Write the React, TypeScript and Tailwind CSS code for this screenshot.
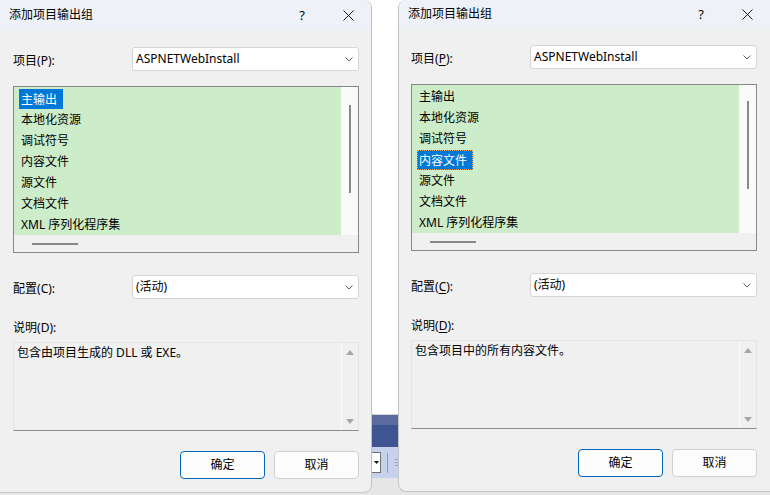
import React from "react"

const ITEMS = ["主输出", "本地化资源", "调试符号", "内容文件", "源文件", "文档文件", "XML 序列化程序集"]

// label like 项目(P): — the right dialog shows the access key underlined
function Accel({ text, k, u }: { text: string; k: string; u: boolean }) {
  return (
    <span>
      {text}(
      {u ? <span className="underline underline-offset-[2px]">{k}</span> : k}
      ):
    </span>
  )
}

function Chevron() {
  return (
    <svg width="8" height="5" viewBox="0 0 8 5">
      <path d="M0.5 0.5 L4 4 L7.5 0.5" fill="none" stroke="#606060" strokeWidth="1" />
    </svg>
  )
}

function Combo({ value }: { value: string }) {
  return (
    <div className="flex h-[24px] w-[227px] items-center rounded-[3px] border border-[#d5d5d5] bg-white pl-[3px] pr-[5px]">
      <span className="flex-1 leading-[16px]">{value}</span>
      <Chevron />
    </div>
  )
}

function Row({ text, k, u, value }: { text: string; k: string; u: boolean; value: string }) {
  return (
    <div className="flex items-center">
      <div className="w-[119px] pt-[3px] leading-[16px]">
        <Accel text={text} k={k} u={u} />
      </div>
      <Combo value={value} />
    </div>
  )
}

function ListBox({ sel, focus, thumbTop }: { sel: number; focus: boolean; thumbTop: number }) {
  return (
    <div className="mt-[15px] flex h-[167px] flex-col border border-[#858885]">
      <div className="flex h-[148px]">
        <div className="w-[327px] bg-[#cdecc9] pl-[5px] pt-px">
          {ITEMS.map((t, i) => (
            <div key={t} className="flex h-[21px] items-center">
              {i === sel ? (
                <span
                  className={
                    focus
                      ? "h-[20px] border border-dotted border-[#e0a060] bg-[#0078d7] pl-[1px] pr-[5px] leading-[19px] text-white"
                      : "h-[20px] bg-[#0078d7] pl-[2px] pr-[6px] leading-[21px] text-white"
                  }
                >
                  {t}
                </span>
              ) : (
                <span className="pl-[2px] leading-[21px]">{t}</span>
              )}
            </div>
          ))}
        </div>
        <div className="w-[17px] bg-[#fafafa]" style={{ paddingTop: thumbTop }}>
          <div className="mx-auto h-[88px] w-[2px] bg-[#888888]" />
        </div>
      </div>
      <div className="h-[17px] bg-[#f0f0f0] pl-[18px] pt-[8px]">
        <div className="h-[2px] w-[46px] bg-[#888888]" />
      </div>
    </div>
  )
}

function Dialog({
  u,
  sel,
  focus,
  desc,
  titleH,
  thumbTop,
  outer,
  pad,
}: {
  u: boolean
  sel: number
  focus: boolean
  desc: string
  titleH: string
  thumbTop: number
  outer: string
  pad: string
}) {
  return (
    <div className={`flex w-[372px] shrink-0 flex-col overflow-hidden bg-[#f0f0f0] ${outer}`}>
      <div className={`flex shrink-0 items-center bg-[#eef2f8] ${titleH}`}>
        <span className="flex-1 pl-[9px] leading-[16px]">添加项目输出组</span>
        <span className="w-[46px] text-center text-[13px] leading-[16px]">?</span>
        <span className="flex w-[46px] justify-center">
          <svg width="11" height="11" viewBox="0 0 11 11">
            <path d="M0.5 0.5 L10.5 10.5 M10.5 0.5 L0.5 10.5" stroke="#1a1a1a" strokeWidth="1" />
          </svg>
        </span>
      </div>

      <div className={`flex flex-col pt-[17px] ${pad}`}>
        <Row text="项目" k="P" u={u} value="ASPNETWebInstall" />

        <ListBox sel={sel} focus={focus} thumbTop={thumbTop} />

        <div className="mt-[22px]">
          <Row text="配置" k="C" u={u} value="(活动)" />
        </div>

        <div className="mt-[21px] leading-[16px]">
          <Accel text="说明" k="D" u={u} />
        </div>

        <div className="mt-[6px] flex h-[89px] border border-[#e4e4e4] border-b-[#8c8c8c] bg-[#f0f0f0]">
          <div className="flex-1 pl-[3px] pt-[2px] leading-[16px]">{desc}</div>
          <div className="flex w-[17px] flex-col items-center justify-between border-l border-[#fafafa] pb-[6px] pt-[7px]">
            <svg width="8" height="5" viewBox="0 0 8 5">
              <path d="M4 0 L8 5 L0 5 Z" fill="#a6a6a6" />
            </svg>
            <svg width="8" height="5" viewBox="0 0 8 5">
              <path d="M0 0 L8 0 L4 5 Z" fill="#a6a6a6" />
            </svg>
          </div>
        </div>

        <div className="mt-[20px] flex justify-end gap-[9px]">
          <button className="h-[28px] w-[85px] rounded-[4px] border border-[#0067c0] bg-[#fdfdfd] leading-[16px]">
            确定
          </button>
          <button className="h-[28px] w-[85px] rounded-[4px] border border-[#d0d0d0] bg-[#fdfdfd] leading-[16px]">
            取消
          </button>
        </div>
      </div>
    </div>
  )
}

export default function App() {
  return (
    <div className="flex h-[495px] w-[770px] overflow-hidden bg-[linear-gradient(#ffffff_478px,#e6e6e6_478px)] font-['Noto_Sans','Noto_Sans_CJK_SC',sans-serif] text-[12px] text-black">
      {/* left dialog */}
      <div className="flex flex-col">
        <Dialog
          u={false}
          sel={0}
          focus={false}
          desc="包含由项目生成的 DLL 或 EXE。"
          titleH="h-[30px]"
          thumbTop={18}
          outer="h-[493px] rounded-tr-[8px] rounded-br-[8px] border-r border-b border-[#b0cfa6] border-b-[#c8c8c8]"
          pad="pl-[13px] pr-[12px]"
        />
      </div>

      {/* strip of the window behind */}
      <div className="flex w-[26px] flex-col">
        <div className="h-[414px] bg-white" />
        <div className="h-px bg-[#d4d4d4]" />
        <div className="h-[10px] bg-[#5b6b9b]" />
        <div className="h-[22px] bg-[#3f5591]" />
        <div className="flex h-[31px] items-center bg-[#c8d1ec]">
          <div className="flex h-[21px] w-[9px] items-center justify-center border-y border-r border-[#707070] bg-white">
            <svg width="5" height="3" viewBox="0 0 5 3">
              <path d="M0 0 L5 0 L2.5 3 Z" fill="#111" />
            </svg>
          </div>
          <div className="ml-[6px] h-[20px] w-px bg-[#8e99bf]" />
          <div className="ml-[7px] flex flex-col gap-[2px]">
            <div className="h-px w-[3px] bg-[#9aa3c0]" />
            <div className="h-px w-[3px] bg-[#9aa3c0]" />
            <div className="h-px w-[3px] bg-[#9aa3c0]" />
          </div>
        </div>
        <div className="flex-1 bg-[#e6e6e6]" />
      </div>

      {/* right dialog */}
      <div className="flex flex-col">
        <Dialog
          u={true}
          sel={3}
          focus={true}
          desc="包含项目中的所有内容文件。"
          titleH="h-[28px]"
          thumbTop={16}
          outer="h-[492px] rounded-tl-[8px] rounded-bl-[8px] border-l border-b border-[#c4c4c4]"
          pad="pl-[12px] pr-[13px]"
        />
      </div>
    </div>
  )
}
